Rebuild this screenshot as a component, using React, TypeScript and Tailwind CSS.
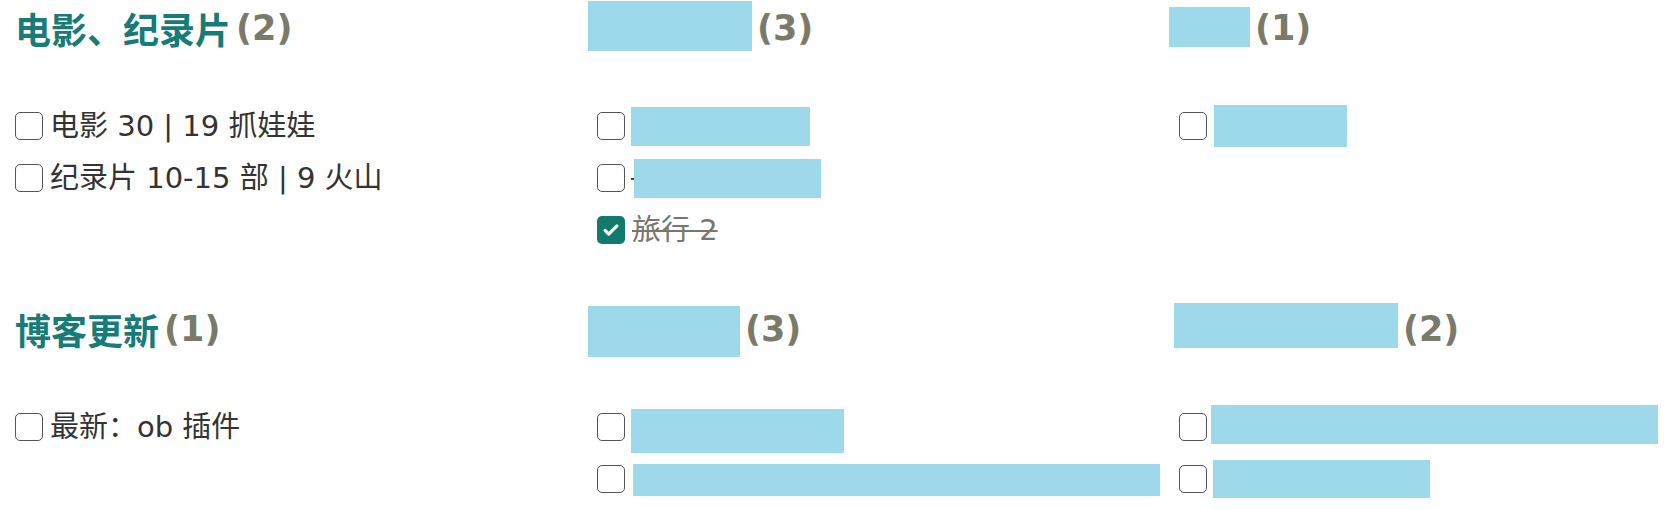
import React from "react";

const BLUE = "bg-[#9dd9ea]";

function Box({ w, h, className = "" }: { w: string; h: string; className?: string }) {
  return <span className={`inline-block shrink-0 ${BLUE} ${w} ${h} ${className}`} />;
}

function Check({ checked = false }: { checked?: boolean }) {
  if (checked) {
    return (
      <span className="inline-flex shrink-0 w-[28px] h-[28px] rounded-[5px] bg-[#127a6b] items-center justify-center">
        <svg width="22" height="22" viewBox="0 0 24 24" fill="none">
          <path d="M5.5 12.5l4 4L18.5 7.5" stroke="#fff" strokeWidth="3.4" strokeLinecap="round" strokeLinejoin="round" />
        </svg>
      </span>
    );
  }
  return <span className="inline-block shrink-0 w-[28px] h-[28px] rounded-[5px] border-[1.5px] border-[#555] bg-white" />;
}

function Count({ n }: { n: number }) {
  return (
    <span className="ml-[5px] text-[35px] leading-[56px] font-bold text-[#7a7a6a] [font-family:'DejaVu_Sans',sans-serif]">
      ({n})
    </span>
  );
}

function Row({ children }: { children: React.ReactNode }) {
  return <div className="flex items-center h-[52px]">{children}</div>;
}

function Txt({ children }: { children: React.ReactNode }) {
  return <span className="ml-[7px] text-[#333] text-[29px] leading-[36px] whitespace-nowrap">{children}</span>;
}

export default function App() {
  return (
    <div className="w-[1666px] h-[509px] overflow-hidden bg-white pl-[15px] [font-family:'DejaVu_Sans','Noto_Sans_CJK_SC',sans-serif]">
      <div className="grid grid-cols-[567px_567px_1fr] gap-x-[15px] gap-y-[45px]">
        {/* Section 1, col 1 */}
        <div>
          <div className="flex items-start h-[56px]">
            <span className="text-[36px] leading-[56px] font-bold text-[#177b77] [font-family:'Noto_Sans_CJK_SC',sans-serif]">电影、纪录片</span>
            <Count n={2} />
          </div>
          <div className="mt-[44px]">
            <Row>
              <Check />
              <Txt>电影 30 | 19 抓娃娃</Txt>
            </Row>
            <Row>
              <Check />
              <Txt>纪录片 10-15 部 | 9 火山</Txt>
            </Row>
          </div>
        </div>
        {/* Section 1, col 2 */}
        <div>
          <div className="flex items-start h-[56px]">
            <Box w="w-[164px]" h="h-[50px]" className="ml-[-9px] mt-[1px]" />
            <Count n={3} />
          </div>
          <div className="mt-[44px]">
            <Row>
              <Check />
              <Box w="w-[179px]" h="h-[39px]" className="ml-[6px] mt-[1px]" />
            </Row>
            <Row>
              <Check />
              <span className="inline-block w-[3px] h-[2px] bg-[#444] ml-[6px] mt-[2px]" />
              <Box w="w-[187px]" h="h-[39px]" className="mt-[1px]" />
            </Row>
            <Row>
              <Check checked />
              <span className="ml-[7px] text-[#77776f] text-[29px] leading-[36px] line-through decoration-[2px] whitespace-nowrap">旅行 2</span>
            </Row>
          </div>
        </div>
        {/* Section 1, col 3 */}
        <div>
          <div className="flex items-start h-[56px]">
            <Box w="w-[81px]" h="h-[40px]" className="ml-[-10px] mt-[7px]" />
            <Count n={1} />
          </div>
          <div className="mt-[44px]">
            <Row>
              <Check />
              <Box w="w-[133px]" h="h-[42px]" className="ml-[7px]" />
            </Row>
          </div>
        </div>

        {/* Section 2, col 1 */}
        <div>
          <div className="flex items-start h-[56px]">
            <span className="text-[36px] leading-[56px] font-bold text-[#177b77] [font-family:'Noto_Sans_CJK_SC',sans-serif]">博客更新</span>
            <Count n={1} />
          </div>
          <div className="mt-[44px]">
            <Row>
              <Check />
              <Txt>最新：ob 插件</Txt>
            </Row>
          </div>
        </div>
        {/* Section 2, col 2 */}
        <div>
          <div className="flex items-start h-[56px]">
            <Box w="w-[152px]" h="h-[51px]" className="ml-[-9px] mt-[5px]" />
            <Count n={3} />
          </div>
          <div className="mt-[44px]">
            <Row>
              <Check />
              <Box w="w-[213px]" h="h-[44px]" className="ml-[6px] mt-[8px]" />
            </Row>
            <Row>
              <Check />
              <Box w="w-[527px]" h="h-[32px]" className="ml-[8px] mt-[2px]" />
            </Row>
          </div>
        </div>
        {/* Section 2, col 3 */}
        <div>
          <div className="flex items-start h-[56px]">
            <Box w="w-[224px]" h="h-[45px]" className="ml-[-5px] mt-[2px]" />
            <Count n={2} />
          </div>
          <div className="mt-[44px]">
            <Row>
              <Check />
              <Box w="w-[447px]" h="h-[39px]" className="ml-[4px] mb-[5px]" />
            </Row>
            <Row>
              <Check />
              <Box w="w-[217px]" h="h-[38px]" className="ml-[6px]" />
            </Row>
          </div>
        </div>
      </div>
    </div>
  );
}
